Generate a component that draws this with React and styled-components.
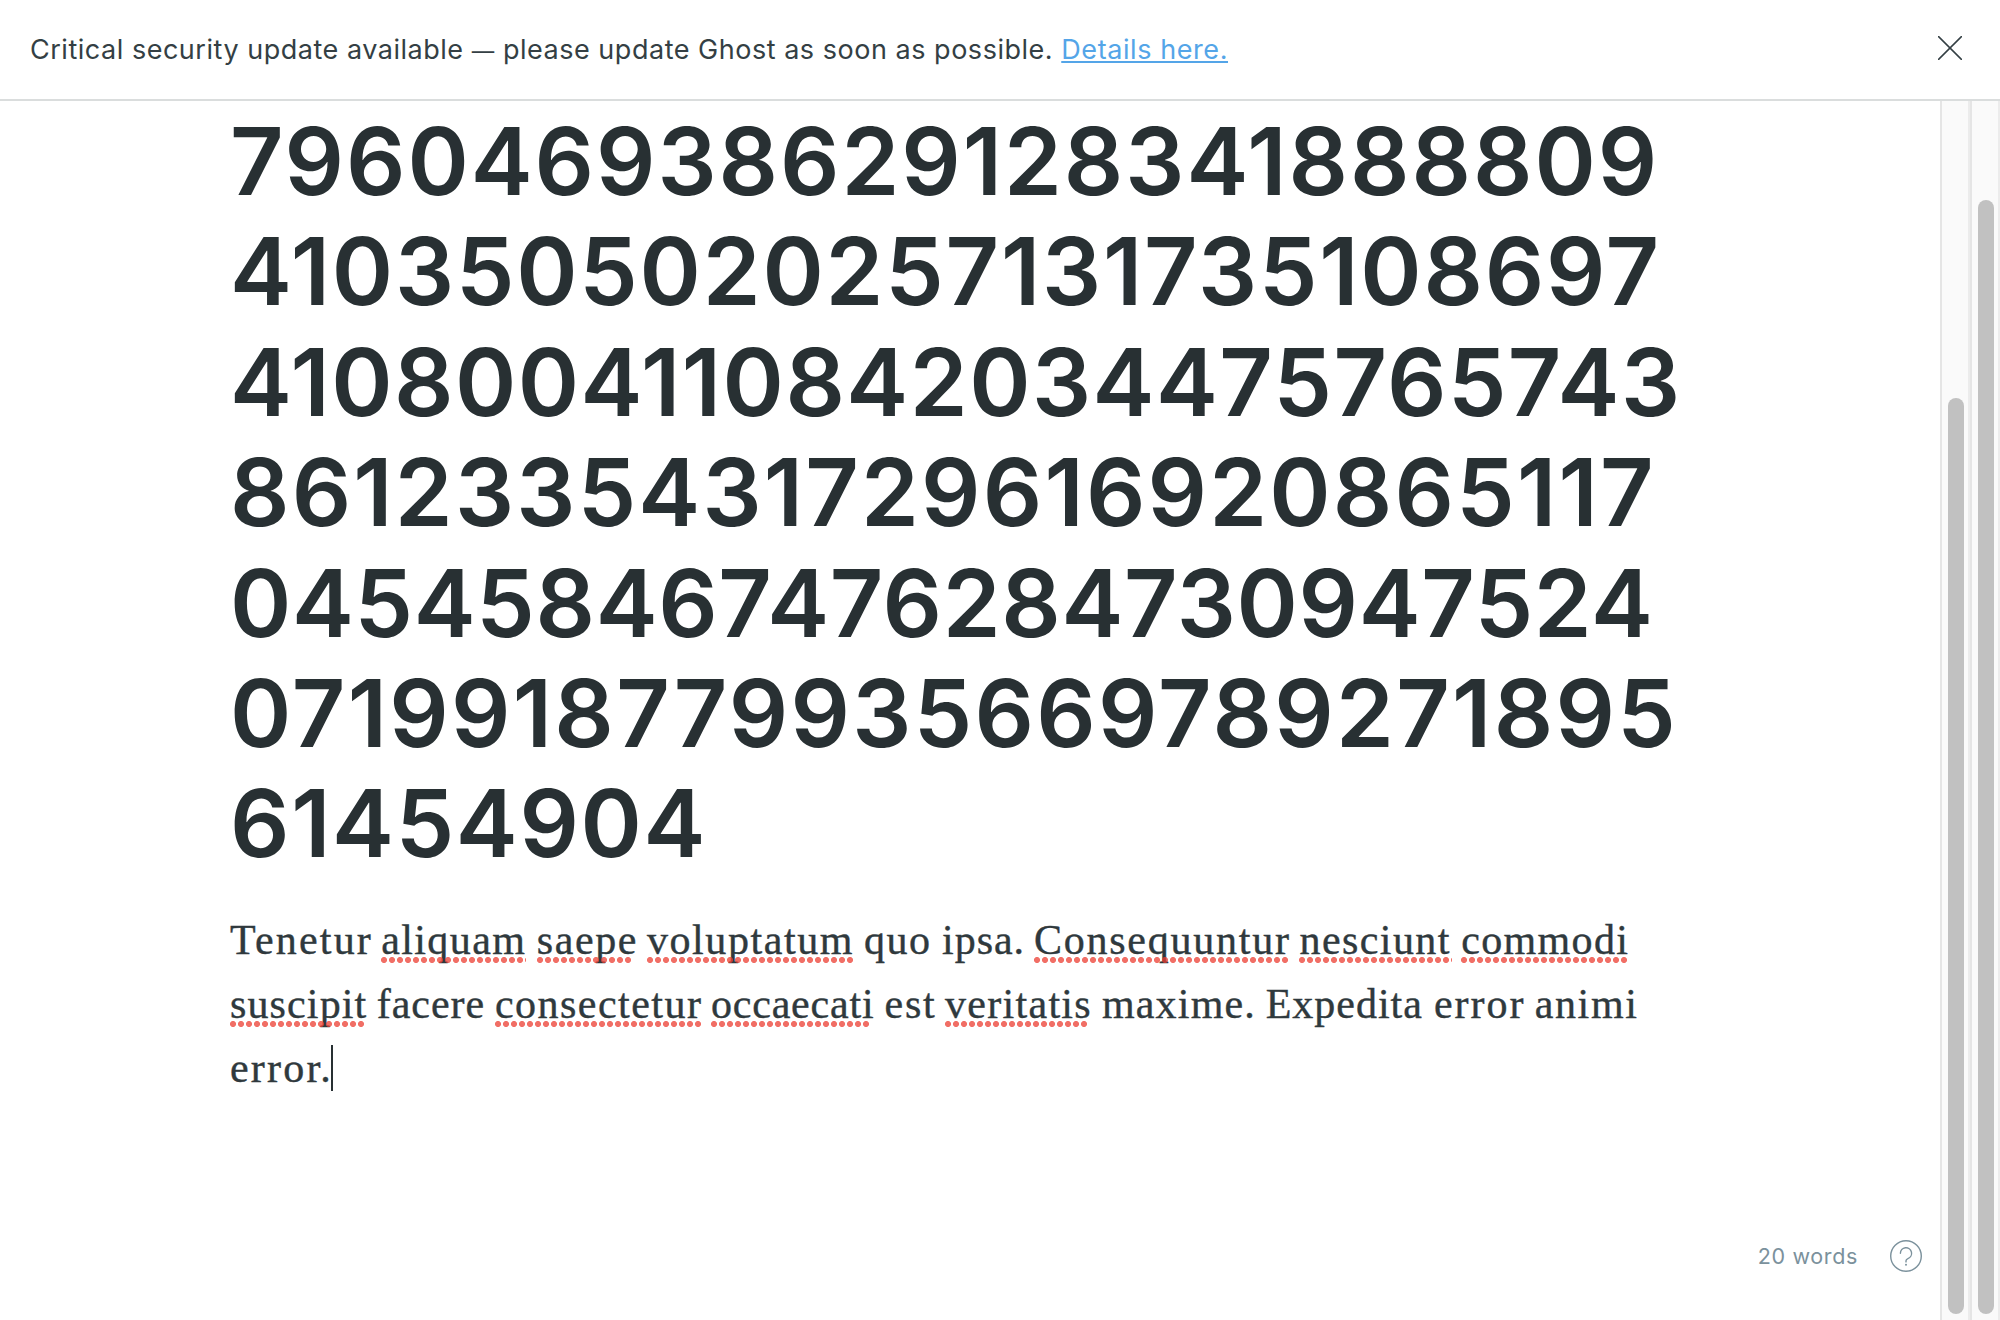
import React from 'react';
import styled, { createGlobalStyle } from 'styled-components';

const GlobalStyle = createGlobalStyle`
  *, *::before, *::after { box-sizing: border-box; }
  html, body { margin: 0; background: #fff; overflow: hidden; }
  body { font-family: Inter, "Liberation Sans", sans-serif; color: #343f44; }
`;

const Page = styled.div`
  display: flex;
  flex-direction: column;
  width: 2000px;
  height: 1320px;
  background: #fff;
`;

const Alert = styled.header`
  display: flex;
  align-items: center;
  justify-content: space-between;
  flex: 0 0 101px;
  padding: 0 38px 0 30px;
  border-bottom: 2px solid #dadddd;
  font-size: 27px;
  line-height: 40px;
  letter-spacing: 0.52px;
  white-space: pre;
`;

const Dash = styled.span`
  font-size: 22.5px;
  line-height: 1;
`;

const AlertLink = styled.a`
  color: #54a5e8;
  letter-spacing: 0.58px;
  text-decoration: underline;
  text-decoration-thickness: 2px;
  text-decoration-skip-ink: none;
  text-underline-offset: 2px;
`;

const CloseButton = styled.button`
  display: flex;
  margin: 0 0 3px;
  padding: 0;
  border: 0;
  background: none;
  color: #343f44;
`;

const Workspace = styled.div`
  display: flex;
  flex: 1;
  min-height: 0;
`;

const Editor = styled.main`
  display: flex;
  flex-direction: column;
  flex: 1;
  min-width: 0;
  padding: 5px 18px 48px 230px;
`;

const Title = styled.h1`
  margin: 0 0 29px;
  color: #283033;
  font-size: 93px;
  font-weight: 600;
  line-height: 110.4px;
`;

const TitleLine = styled.span`
  display: block;
  letter-spacing: ${(p) => p.$track}px;
  white-space: nowrap;
`;

const Paragraph = styled.p`
  margin: 0;
  color: #2f393d;
  font-family: "Liberation Serif", serif;
  font-size: 42px;
  line-height: 64px;
  -webkit-text-stroke: 0.4px #2f393d;
`;

const TextLine = styled.span`
  display: flex;
  height: 64px;
  white-space: pre;
`;

const Word = styled.span`
  position: relative;
  flex: 0 0 ${(p) => p.$advance}px;
  min-width: 0;
  letter-spacing: ${(p) => p.$track}px;
`;

const Misspelling = styled.span`
  position: absolute;
  top: 49px;
  left: 0;
  width: ${(p) => p.$width}px;
  height: 6px;
  background: radial-gradient(circle at 3px 3px, rgba(236, 60, 48, 0.74) 2.7px, transparent 3.3px) 0 0 / 8px 6px repeat-x;
`;

const Caret = styled.span`
  width: 2px;
  height: 46px;
  margin-top: 9px;
  background: #283033;
`;

const Status = styled.footer`
  display: flex;
  align-items: center;
  justify-content: flex-end;
  gap: 32px;
  margin-top: auto;
  color: #7b919c;
  font-size: 21.5px;
  line-height: 32px;
  letter-spacing: 0.64px;
`;

const Track = styled.div`
  flex: 0 0 30px;
  padding: ${(p) => p.$top}px 4px 6px 6px;
  border-left: 2px solid #e5e5e5;
  border-right: 2px solid #ececec;
  background: #fafafa;
`;

const Thumb = styled.div`
  height: 100%;
  border-radius: 8px;
  background: #c1c1c1;
`;

const titleLines = [
  ['796046938629128341888809', 1.93],
  ['4103505020257131735108697', 1.78],
  ['4108004110842034475765743', 1.45],
  ['8612335431729616920865117', 2.17],
  ['045458467476284730947524', 0.65],
  ['0719918779935669789271895', 2.27],
  ['61454904', 1.65],
];

// [text, advance, letter spacing, width of the spelling mark]
const textLines = [
  [
    ['Tenetur', 151.2, 2.2],
    ['aliquam', 155.6, 1.4, 144.4],
    ['saepe', 110.2, 1.6, 94.3],
    ['voluptatum', 217, 1.57, 206],
    ['quo', 78, 1.5],
    ['ipsa.', 92, 1],
    ['Consequuntur', 265.5, 1.75, 256.4],
    ['nesciunt', 161.7, 1.43, 152.1],
    ['commodi', 170, 1.35, 168.3],
  ],
  [
    ['suscipit', 146.7, 1.13, 134.5],
    ['facere', 118.3, 1],
    ['consectetur', 216, 1.47, 206],
    ['occaecati', 173.6, 0.8, 160.3],
    ['est', 60.4, 1.7],
    ['veritatis', 157, 1.3, 142.4],
    ['maxime.', 163.7, 1.17],
    ['Expedita', 168.3, 1],
    ['error', 100.7, 2],
    ['animi', 102, 1.65],
  ],
  [['error.', 101, 2.2]],
];

const CloseIcon = () => (
  <svg width="24" height="24" viewBox="0 0 24 24" fill="none" stroke="currentColor" strokeWidth="1.5" strokeLinecap="round">
    <path d="M.6.6l22.8 22.8M23.4.6L.6 23.4" />
  </svg>
);

const HelpIcon = () => (
  <svg width="32" height="32" viewBox="0 0 32 32" fill="none" stroke="currentColor" strokeWidth="1.4" strokeLinecap="round">
    <circle cx="16" cy="16" r="15.3" />
    <path d="M10.4 13.3a5.6 5.6 0 1 1 7.5 5.3C16.6 19.1 16 19.7 16 20.7v1.2" />
    <circle cx="16" cy="24.8" r="1" fill="currentColor" stroke="none" />
  </svg>
);

export default function App() {
  return (
    <Page>
      <GlobalStyle />
      <Alert>
        <span>
          {'Critical security update available '}
          <Dash>—</Dash>
          {' please update Ghost as soon as possible. '}
          <AlertLink>Details here.</AlertLink>
        </span>
        <CloseButton aria-label="Close">
          <CloseIcon />
        </CloseButton>
      </Alert>
      <Workspace>
        <Editor>
          <Title>
            {titleLines.map(([digits, track]) => (
              <TitleLine key={digits} $track={track}>{digits}</TitleLine>
            ))}
          </Title>
          <Paragraph>
            {textLines.map((words, i) => (
              <TextLine key={i}>
                {words.map(([text, advance, track, mark]) => (
                  <Word key={text} $advance={advance} $track={track}>
                    {text}
                    {mark && <Misspelling $width={mark} />}
                  </Word>
                ))}
                {i === textLines.length - 1 && <Caret />}
              </TextLine>
            ))}
          </Paragraph>
          <Status>
            <span>20 words</span>
            <HelpIcon />
          </Status>
        </Editor>
        <Track $top={297}><Thumb /></Track>
        <Track $top={99}><Thumb /></Track>
      </Workspace>
    </Page>
  );
}
